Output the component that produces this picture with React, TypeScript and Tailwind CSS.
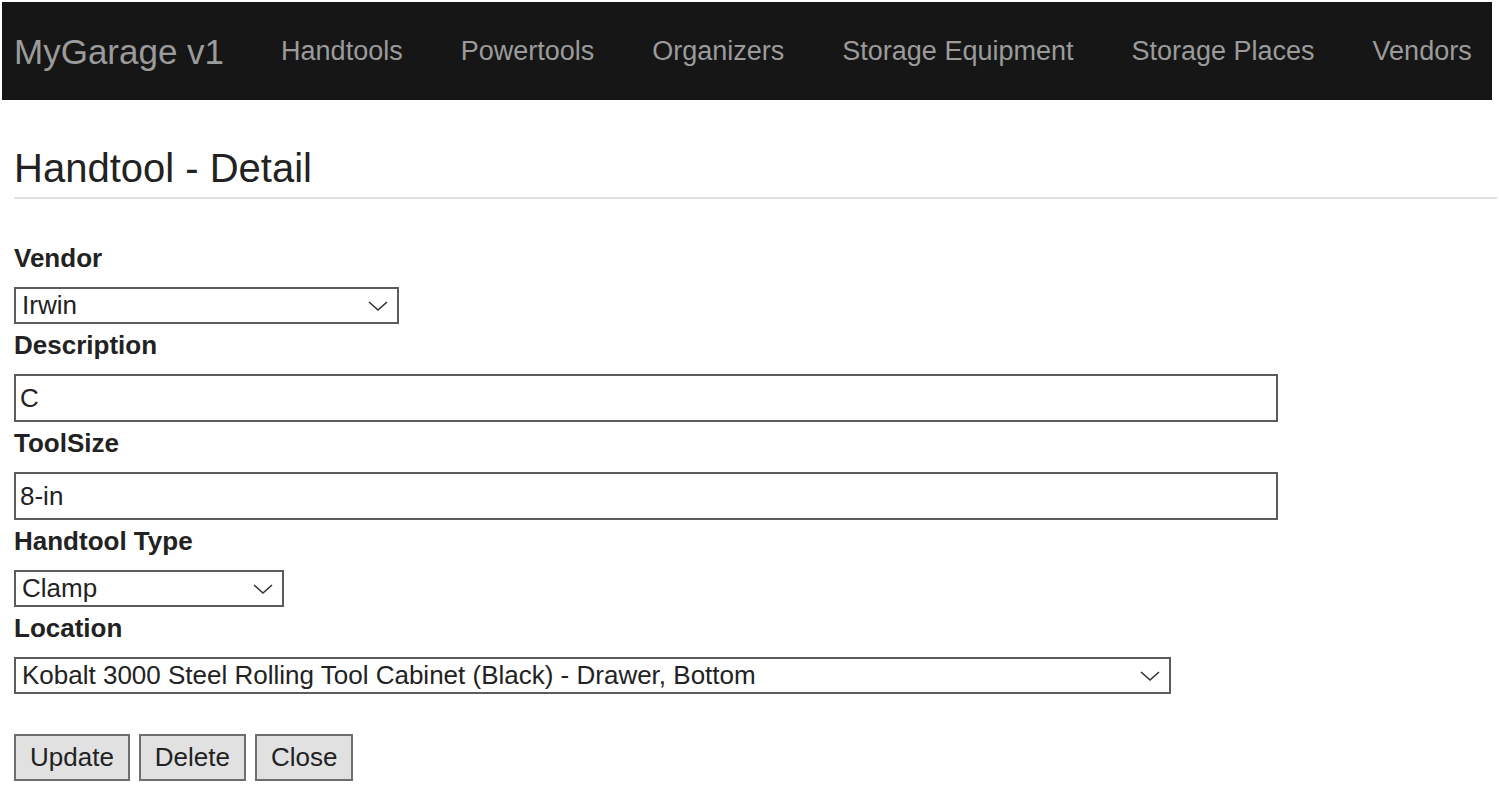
const links = [
  "Handtools",
  "Powertools",
  "Organizers",
  "Storage Equipment",
  "Storage Places",
  "Vendors",
];

function Chevron() {
  return (
    <svg width="20" height="11" viewBox="0 0 20 11" fill="none" className="pointer-events-none absolute right-[9px] top-1/2 -translate-y-1/2">
      <path d="M1 1.5 L10 9.5 L19 1.5" stroke="#333" strokeWidth="1.6" />
    </svg>
  );
}

function Label({ children }: { children: React.ReactNode }) {
  return <div className="mb-[14px] h-[30px] text-[26px] font-bold leading-[30px] text-[#222]">{children}</div>;
}

function Select({ value, w }: { value: string; w: string }) {
  return (
    <div className={`relative mb-[6px] h-[37px] ${w} border-2 border-[#5c5c5c] bg-white`}>
      <div className="pl-[6px] text-[26px] leading-[33px] text-[#222]">{value}</div>
      <Chevron />
    </div>
  );
}

function TextBox({ value }: { value: string }) {
  return (
    <div className="mb-[6px] h-[48px] w-[1264px] border-2 border-[#5c5c5c] bg-white pl-[4px] text-[26px] leading-[44px] text-[#222]">
      {value}
    </div>
  );
}

function Btn({ children }: { children: React.ReactNode }) {
  return (
    <button className="h-[47px] border-2 border-[#6e6e6e] bg-[#e1e1e1] px-[14px] text-[26px] leading-[43px] text-[#222]">
      {children}
    </button>
  );
}

export default function App() {
  return (
    <div className="min-h-[789px] w-[1499px] bg-white font-['Liberation_Sans',Arial,sans-serif]">
      <div className="pl-[2px] pr-[7px] pt-[2px]">
        <nav className="flex h-[98px] items-center whitespace-nowrap bg-[#161616] text-[#9b9b9b]">
          <span className="mr-[28px] shrink-0 pl-[12px] text-[35px] leading-none">MyGarage v1</span>
          {links.map((l) => (
            <span key={l} className="shrink-0 px-[29px] text-[27px] leading-none">
              {l}
            </span>
          ))}
        </nav>
      </div>

      <div className="px-[14px]">
        <h1 className="mr-[-12px] mt-[46px] h-[53px] border-b-2 border-[#e0e0e0] text-[40px] leading-[44px] text-[#222]">
          Handtool - Detail
        </h1>

        <div className="mt-[44px]">
          <Label>Vendor</Label>
          <Select value="Irwin" w="w-[385px]" />
          <Label>Description</Label>
          <TextBox value="C" />
          <Label>ToolSize</Label>
          <TextBox value="8-in" />
          <Label>Handtool Type</Label>
          <Select value="Clamp" w="w-[270px]" />
          <Label>Location</Label>
          <Select value="Kobalt 3000 Steel Rolling Tool Cabinet (Black) - Drawer, Bottom" w="w-[1157px]" />
        </div>

        <div className="mt-[40px] flex gap-[9px]">
          <Btn>Update</Btn>
          <Btn>Delete</Btn>
          <Btn>Close</Btn>
        </div>
      </div>
    </div>
  );
}
